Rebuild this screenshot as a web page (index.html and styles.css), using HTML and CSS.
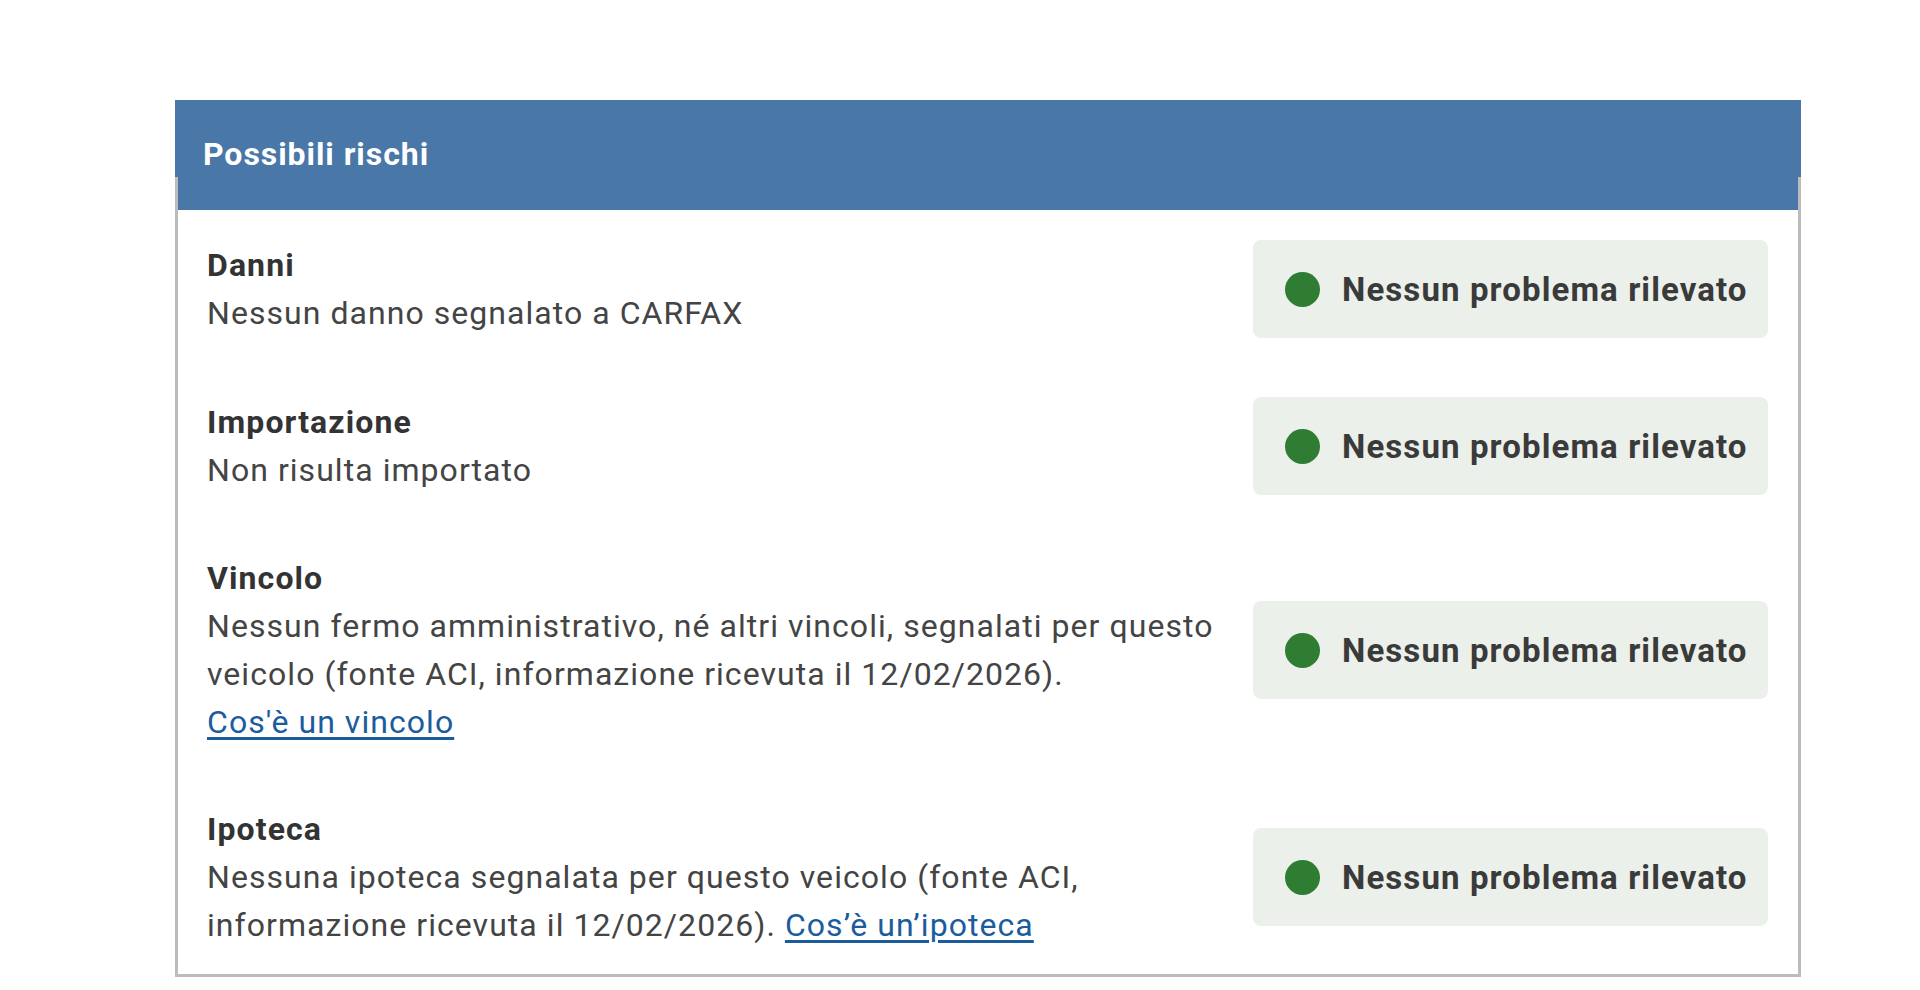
FILE: index.html
```html
<!DOCTYPE html>
<html lang="it">
<head>
<meta charset="utf-8">
<title>Possibili rischi</title>
<link rel="stylesheet" href="styles.css">
</head>
<body>
<section class="card">
  <h2 class="card-title">Possibili rischi</h2>
  <div class="card-body">
    <div class="risk">
      <div class="risk-info">
        <div class="risk-label">Danni</div>
        <p class="risk-desc">Nessun danno segnalato a CARFAX</p>
      </div>
      <div class="status"><span class="dot"></span><span class="status-text">Nessun problema rilevato</span></div>
    </div>
    <div class="risk">
      <div class="risk-info">
        <div class="risk-label">Importazione</div>
        <p class="risk-desc">Non risulta importato</p>
      </div>
      <div class="status"><span class="dot"></span><span class="status-text">Nessun problema rilevato</span></div>
    </div>
    <div class="risk">
      <div class="risk-info">
        <div class="risk-label">Vincolo</div>
        <p class="risk-desc">Nessun fermo amministrativo, né altri vincoli, segnalati per questo veicolo (fonte ACI, informazione ricevuta il 12/02/2026). <a class="risk-link" href="#">Cos'è un vincolo</a></p>
      </div>
      <div class="status"><span class="dot"></span><span class="status-text">Nessun problema rilevato</span></div>
    </div>
    <div class="risk">
      <div class="risk-info">
        <div class="risk-label">Ipoteca</div>
        <p class="risk-desc">Nessuna ipoteca segnalata per questo veicolo (fonte ACI, informazione ricevuta il 12/02/2026). <a class="risk-link" href="#">Cos’è un’ipoteca</a></p>
      </div>
      <div class="status"><span class="dot"></span><span class="status-text">Nessun problema rilevato</span></div>
    </div>
  </div>
</section>
</body>
</html>
```

FILE: styles.css
```css
html, body {
  margin: 0;
  padding: 0;
  background: #ffffff;
}

body {
  font-family: Roboto, "Liberation Sans", Arial, sans-serif;
  color: #3d3d3d;
  padding: 100px 0 0 175px;
}

.card {
  width: 1626px;
}

.card-title {
  margin: 0;
  height: 110px;
  display: flex;
  align-items: center;
  padding: 0 28px 2px;
  box-sizing: border-box;
  background: #4877a8;
  color: #ffffff;
  font-size: 32px;
  font-weight: 700;
  letter-spacing: 0.95px;
}

.card-body {
  margin-top: -33px;
  padding: 63px 30px 25px 29px;
  border: 3px solid #bcbcbc;
  border-top: none;
}

.risk {
  display: flex;
  align-items: center;
  gap: 30px;
  margin-bottom: 59px;
}

.risk:last-child {
  margin-bottom: 0;
}

.risk-info {
  flex: 1;
  min-width: 0;
}

.risk-label {
  font-size: 32px;
  font-weight: 700;
  line-height: 48px;
  letter-spacing: 1.1px;
  color: #333333;
}

.risk-desc {
  margin: 0;
  font-size: 32px;
  line-height: 48px;
  letter-spacing: 1.05px;
  color: #444444;
}

.risk-link {
  color: #1a5c9c;
  white-space: nowrap;
  text-decoration-thickness: 3px;
  text-underline-offset: 4px;
}

.status {
  flex: none;
  width: 515px;
  height: 98px;
  box-sizing: border-box;
  padding: 0 18px 0 32px;
  display: flex;
  align-items: center;
  gap: 22px;
  background: #ebf0ea;
  border-radius: 8px;
}

.dot {
  width: 35px;
  height: 35px;
  border-radius: 50%;
  background: #2e7d32;
  flex: none;
}

.status-text {
  font-size: 33px;
  font-weight: 700;
  letter-spacing: 1.1px;
  color: #3a3a3a;
  white-space: nowrap;
}
```
